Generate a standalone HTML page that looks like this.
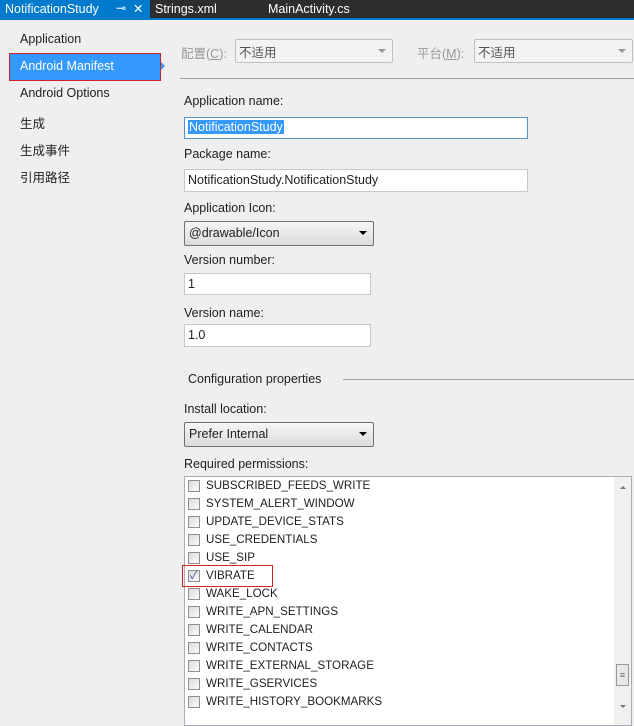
<!DOCTYPE html>
<html><head><meta charset="utf-8"><style>
*{box-sizing:border-box;margin:0;padding:0}
body{width:634px;height:719px;overflow:hidden;background:#efefef;font-family:"Liberation Sans","Noto Sans CJK SC",sans-serif;font-size:12.5px;color:#1e1e1e;position:relative}
.a{position:absolute;white-space:nowrap}
.tb{background:#fff;border:1px solid #c8c8c8}
.cb{background:linear-gradient(#f6f6f6,#dcdcdc);border:1px solid #707070;border-radius:2px}
.dis{background:#f3f3f3;border:1px solid #c0c0c0;border-radius:2px;color:#555}
.arr{position:absolute;right:6px;top:9px;width:0;height:0;border-left:4px solid transparent;border-right:4px solid transparent;border-top:4px solid #000}
.row{position:absolute;left:3px;height:18px;line-height:18px;font-size:11.6px}
.chk{position:absolute;left:0;top:3px;width:12px;height:12px;border:1px solid #8e8f8f;background:linear-gradient(135deg,#dcdcdc,#fafafa)}
.row span{position:absolute;left:18px}
</style></head><body>
<div class="a" style="left:0;top:0;width:634px;height:18px;background:#2d2d30"></div>
<div class="a" style="left:0;top:18px;width:634px;height:2px;background:#007acc"></div>
<div class="a" style="left:0;top:0;width:150px;height:20px;background:#007acc"></div>
<div class="a" style="left:5px;top:2px;color:#fff">NotificationStudy</div>
<div class="a" style="left:116px;top:1px;color:#fff;font-size:12px">⊸</div>
<div class="a" style="left:133px;top:1px;color:#fff">✕</div>
<div class="a" style="left:155px;top:2px;color:#fff">Strings.xml</div>
<div class="a" style="left:268px;top:2px;color:#fff">MainActivity.cs</div>

<div class="a" style="left:20px;top:32px">Application</div>
<div class="a" style="left:9px;top:53px;width:152px;height:28px;background:#3399ff;border:1px solid #d0202a"></div>
<div class="a" style="left:20px;top:59px;color:#fff">Android Manifest</div>
<div class="a" style="left:161px;top:62px;border-top:4px solid transparent;border-bottom:4px solid transparent;border-left:4px solid #3399ff"></div>
<div class="a" style="left:20px;top:86px">Android Options</div>
<div class="a" style="left:20px;top:113px">生成</div>
<div class="a" style="left:20px;top:140px">生成事件</div>
<div class="a" style="left:20px;top:167px">引用路径</div>

<div class="a" style="left:181px;top:43px;color:#999">配置(<u>C</u>):</div>
<div class="a dis" style="left:235px;top:39px;width:158px;height:24px"><span style="position:absolute;left:3px;top:2px">不适用</span><div class="arr" style="border-top-color:#999"></div></div>
<div class="a" style="left:417px;top:43px;color:#999">平台(<u>M</u>):</div>
<div class="a dis" style="left:474px;top:39px;width:159px;height:24px"><span style="position:absolute;left:3px;top:2px">不适用</span><div class="arr" style="border-top-color:#999"></div></div>
<div class="a" style="left:180px;top:78px;width:454px;height:1px;background:#a0a0a0"></div>

<div class="a" style="left:184px;top:94px">Application name:</div>
<div class="a tb" style="left:184px;top:117px;width:344px;height:22px;border-color:#5b8fc9"><span style="position:absolute;left:3px;top:2px;background:#3399ff;color:#fff;padding:0 1px">NotificationStudy</span></div>
<div class="a" style="left:184px;top:147px">Package name:</div>
<div class="a tb" style="left:184px;top:169px;width:344px;height:23px"><span style="position:absolute;left:3px;top:3px">NotificationStudy.NotificationStudy</span></div>
<div class="a" style="left:184px;top:201px">Application Icon:</div>
<div class="a cb" style="left:184px;top:221px;width:190px;height:25px"><span style="position:absolute;left:4px;top:4px">@drawable/Icon</span><div class="arr"></div></div>
<div class="a" style="left:184px;top:253px">Version number:</div>
<div class="a tb" style="left:184px;top:273px;width:187px;height:22px"><span style="position:absolute;left:3px;top:3px">1</span></div>
<div class="a" style="left:184px;top:306px">Version name:</div>
<div class="a tb" style="left:184px;top:324px;width:187px;height:23px"><span style="position:absolute;left:3px;top:3px">1.0</span></div>
<div class="a" style="left:188px;top:372px">Configuration properties</div>
<div class="a" style="left:343px;top:379px;width:291px;height:1px;background:#a0a0a0"></div>
<div class="a" style="left:184px;top:402px">Install location:</div>
<div class="a cb" style="left:184px;top:422px;width:190px;height:25px"><span style="position:absolute;left:4px;top:4px">Prefer Internal</span><div class="arr"></div></div>
<div class="a" style="left:184px;top:457px">Required permissions:</div>

<div class="a tb" style="left:184px;top:476px;width:448px;height:250px;border-color:#abadb3">
<div class="row" style="top:0"><div class="chk"></div><span>SUBSCRIBED_FEEDS_WRITE</span></div>
<div class="row" style="top:18px"><div class="chk"></div><span>SYSTEM_ALERT_WINDOW</span></div>
<div class="row" style="top:36px"><div class="chk"></div><span>UPDATE_DEVICE_STATS</span></div>
<div class="row" style="top:54px"><div class="chk"></div><span>USE_CREDENTIALS</span></div>
<div class="row" style="top:72px"><div class="chk"></div><span>USE_SIP</span></div>
<div class="row" style="top:90px"><div class="chk"><div style="position:absolute;left:1px;top:-4px;font-size:11px;color:#3a56a0">✓</div></div><span>VIBRATE</span></div>
<div class="row" style="top:108px"><div class="chk"></div><span>WAKE_LOCK</span></div>
<div class="row" style="top:126px"><div class="chk"></div><span>WRITE_APN_SETTINGS</span></div>
<div class="row" style="top:144px"><div class="chk"></div><span>WRITE_CALENDAR</span></div>
<div class="row" style="top:162px"><div class="chk"></div><span>WRITE_CONTACTS</span></div>
<div class="row" style="top:180px"><div class="chk"></div><span>WRITE_EXTERNAL_STORAGE</span></div>
<div class="row" style="top:198px"><div class="chk"></div><span>WRITE_GSERVICES</span></div>
<div class="row" style="top:216px"><div class="chk"></div><span>WRITE_HISTORY_BOOKMARKS</span></div>
<div style="position:absolute;right:0;top:0;width:17px;height:248px;background:#f0f0f0"></div>
<div style="position:absolute;right:5px;top:9px;border-left:3px solid transparent;border-right:3px solid transparent;border-bottom:3px solid #777"></div>
<div style="position:absolute;right:2px;top:187px;width:13px;height:22px;border:1px solid #999;background:#e8e8e8;font-size:9px;text-align:center;line-height:20px;color:#666">≡</div>
<div style="position:absolute;right:5px;top:228px;border-left:3px solid transparent;border-right:3px solid transparent;border-top:3px solid #777"></div>
</div>
<div class="a" style="left:182px;top:565px;width:91px;height:22px;border:1px solid #d0202a"></div>
</body></html>
